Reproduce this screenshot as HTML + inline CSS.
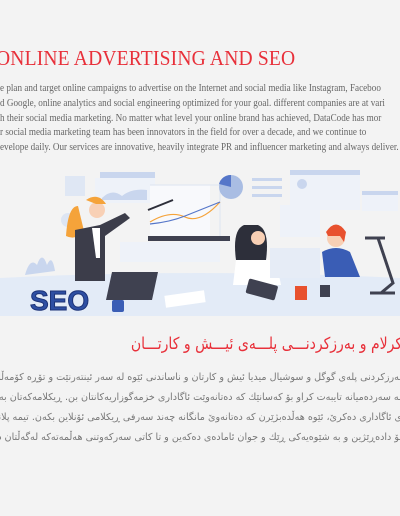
<!DOCTYPE html>
<html><head><meta charset="utf-8"><style>
html,body{margin:0;padding:0;width:400px;height:516px;overflow:hidden;background:#f3f3f3;position:relative}
.t{position:absolute;white-space:nowrap;}
.h{left:-4px;top:46px;font-family:"Liberation Serif",serif;font-size:21px;color:#e8303a;transform:scaleX(0.93);transform-origin:left;letter-spacing:0.2px}
.p{font-family:"Liberation Serif",serif;font-size:11px;color:#666;left:0;transform:scaleX(0.83);transform-origin:left}
.k{font-family:"DejaVu Sans","Noto Sans CJK SC",sans-serif;direction:rtl;right:-2px;transform-origin:right}
.kh{font-size:16.5px;color:#e8303a;top:334px;transform:scaleX(0.85)}
.kp{font-size:9.6px;color:#777}
</style></head><body>
<div class="t h">ONLINE ADVERTISING AND SEO</div>
<div class="t p" style="top:82px">e plan and target online campaigns to advertise on the Internet and social media like Instagram, Faceboo</div>
<div class="t p" style="top:97px">d Google, online analytics and social engineering optimized for your goal. different companies are at vari</div>
<div class="t p" style="top:112px">h their social media marketing. No matter what level your online brand has achieved, DataCode has mor</div>
<div class="t p" style="top:126px">r social media marketing team has been innovators in the field for over a decade, and we continue to</div>
<div class="t p" style="top:141px">evelope daily. Our services are innovative, heavily integrate PR and influencer marketing and always deliver.</div>
<svg class="t" style="left:0;top:160px" width="400" height="160" viewBox="0 0 400 160">
<path d="M0 118 Q200 108 400 118 L400 156 L0 156Z" fill="#e3ebf7"/>
<rect x="100" y="12" width="55" height="6" fill="#c9d6ee"/>
<rect x="95" y="18" width="60" height="25" fill="#eef2f9"/>
<path d="M102 38 q10-10 20-2 q10 -8 25-6 v10h-45z" fill="#c9d6ee"/>
<rect x="65" y="16" width="20" height="20" fill="#dfe7f4"/>
<rect x="150" y="25" width="60" height="55" fill="#f8f9fc"/>
<path d="M150 25 h70 v55 h-70" fill="none" stroke="#dde4f0"/>
<rect x="148" y="76" width="82" height="5" fill="#3f4150"/>
<path d="M150 62 q20-12 35-5 t35-15" fill="none" stroke="#f5a33a" stroke-width="1.2"/>
<path d="M150 64 q20-2 35-8 t35-14" fill="none" stroke="#5576c9" stroke-width="1.2"/>
<line x1="148" y1="50" x2="173" y2="40" stroke="#2d2f3a" stroke-width="2"/>
<circle cx="231" cy="27" r="12" fill="#a9bde3"/>
<path d="M231 27 v-12 a12 12 0 0 0 -12 9z" fill="#5576c9"/>
<rect x="252" y="18" width="30" height="3" fill="#c9d6ee"/><rect x="252" y="26" width="30" height="3" fill="#c9d6ee"/><rect x="252" y="34" width="30" height="3" fill="#c9d6ee"/>
<rect x="290" y="10" width="70" height="40" fill="#eef2f9"/><rect x="290" y="10" width="70" height="5" fill="#c9d6ee"/>
<circle cx="302" cy="24" r="5" fill="#c9d6ee"/>
<rect x="280" y="45" width="40" height="32" fill="#eef2f9"/>
<rect x="362" y="31" width="36" height="20" fill="#eef2f9"/><rect x="362" y="31" width="36" height="4" fill="#c9d6ee"/>
<rect x="120" y="82" width="100" height="20" fill="#eef2f9"/>
<circle cx="68" cy="60" r="7" fill="#dde5f3"/>
<path d="M25 115 q5-18 12-10 q5-15 10 0 q5-12 8 6z" fill="#c9d6ee"/>
<path d="M78 46 q-10 0 -12 30 q10 5 18-5z" fill="#f5a33a"/>
<circle cx="97" cy="50" r="8" fill="#f8d0b5"/>
<path d="M86 40 q12-8 20 4 l-10 0z" fill="#f5a33a"/>
<path d="M75 70 l25-5 l25 -12 l5 5 l-25 18 l0 45 l-30 0z" fill="#3c3d4a"/>
<path d="M92 68 l8 0 l0 30 l-4 0z" fill="#fff"/>
<path d="M112 112 l46 0 l-6 28 l-46 0z" fill="#3f4150"/>
<text x="30" y="150" font-family="Liberation Sans,sans-serif" font-weight="bold" font-size="28" fill="#2e4fa3" stroke="#1d3377" stroke-width="1">SEO</text>
<rect x="112" y="140" width="12" height="12" rx="2" fill="#3a5db5"/>
<rect x="165" y="133" width="40" height="12" fill="#fff" transform="rotate(-8 185 139)"/>
<path d="M244 65 q-12 5 -8 35 l30 0 q4-30 -8-35z" fill="#2d2f3a"/>
<circle cx="258" cy="78" r="7" fill="#f8d0b5"/>
<path d="M236 100 l40 0 l5 25 l-48 0z" fill="#fff"/>
<rect x="247" y="122" width="30" height="15" rx="2" fill="#3f4150" transform="rotate(15 262 129)"/>
<rect x="270" y="88" width="50" height="30" fill="#e6ecf6"/>
<rect x="295" y="126" width="12" height="14" fill="#e8512e"/>
<circle cx="336" cy="78" r="9" fill="#f8d0b5"/>
<path d="M326 72 q10-15 20 0 l-2 10 l-4 -6 l-12 0z" fill="#e8512e"/>
<path d="M322 92 q14-8 28 0 l10 25 l-35 0z" fill="#3a5db5"/>
<rect x="320" y="125" width="10" height="12" fill="#3f4150"/>
<path d="M365 78 l20 0 M378 78 l15 45 l-12 10 M370 133 l25 0" stroke="#3f4150" stroke-width="3" fill="none"/>
</svg>
<div class="t k kh">كرلام و بەرزكردنـــی پلـــەی ئیـــش و کارتـــان</div>
<div class="t k kp" style="top:372px">بەرزکردنی پلەی گوگل و سوشیال میدیا ئیش و کارتان و ناساندنی ئێوە لە سەر ئینتەرنێت و تۆڕە کۆمەڵایەتییەکان</div>
<div class="t k kp" style="top:392px">لە سەردەمیانە تایبەت کراو بۆ کەسانێك کە دەتانەوێت ئاگاداری خزمەگوزاریەکانتان بن. ڕیکلامەکەتان بە شێوە</div>
<div class="t k kp" style="top:412px">ی ئاگاداری دەکرێ، ئێوە هەڵدەبژێرن کە دەتانەوێ مانگانە چەند سەرفی ڕیکلامی ئۆنلاین بکەن. تیمە پلانە</div>
<div class="t k kp" style="top:432px">بۆ دادەڕێژین و بە شێوەیەکی ڕێك و جوان ئامادەی دەکەین و تا کاتی سەرکەوتنی هەڵمەتەکە لەگەڵتان دەبین</div>
</body></html>
